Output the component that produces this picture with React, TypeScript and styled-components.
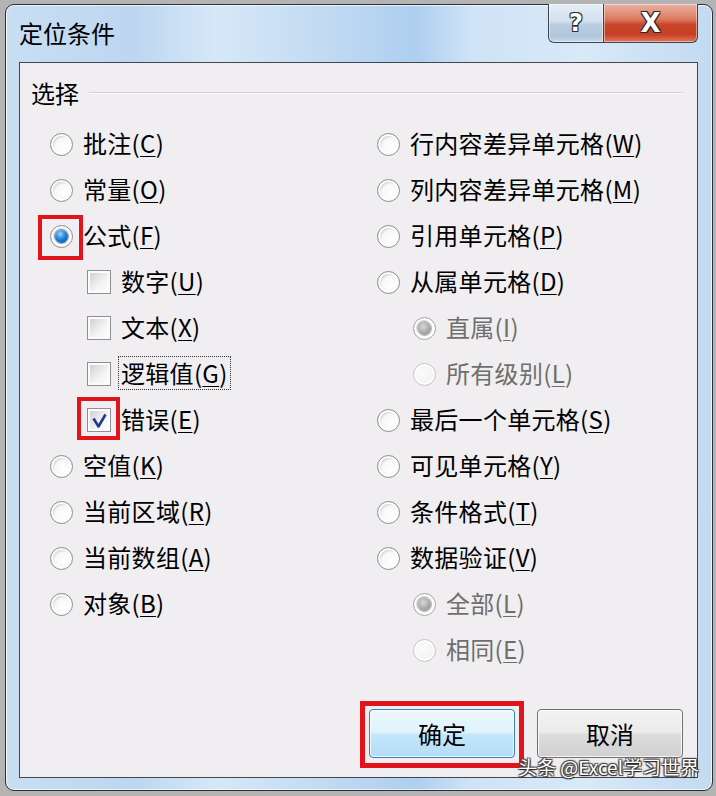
import React, { FC } from 'react';
import styled, { createGlobalStyle } from 'styled-components';

const GlobalStyle = createGlobalStyle`
  html, body {
    margin: 0;
    padding: 0;
    background: #b4b4b4;
    font-family: 'Noto Sans CJK SC', 'Noto Sans', sans-serif;
  }
`;

const Page = styled.div`
  width: 716px;
  height: 796px;
  padding: 4px 0 0 5px;
  box-sizing: border-box;
  position: relative;
  overflow: hidden;
`;

const Window = styled.div`
  width: 708px;
  height: 787px;
  box-sizing: border-box;
  border: 1px solid #2c2f33;
  border-radius: 9px;
  padding: 0 14px 12px 13px;
  display: flex;
  flex-direction: column;
  background: linear-gradient(
      90deg,
      #c9def3 0%,
      #bdd6f0 18%,
      #d6e8f8 30%,
      #c2daf2 45%,
      #aecff0 58%,
      #cfe3f6 66%,
      #d8e9f8 82%,
      #c3daf1 100%
    );
  box-shadow: inset 0 0 0 1px rgba(255, 255, 255, 0.7);
`;

const TitleBar = styled.div`
  height: 57px;
  display: flex;
  align-items: flex-start;
  flex-shrink: 0;
`;

const Title = styled.div`
  margin-top: 13px;
  font-size: 24px;
  line-height: 30px;
  color: #000;
`;

const CaptionButtons = styled.div`
  margin-left: auto;
  margin-top: -1px;
  display: flex;
`;

const CaptionButton = styled.div<{ $close?: boolean }>`
  width: ${(p) => (p.$close ? '94px' : '56px')};
  height: 39px;
  box-sizing: border-box;
  border: 1px solid #3b4552;
  border-top: none;
  border-left: ${(p) => (p.$close ? 'none' : '1px solid #3b4552')};
  border-radius: ${(p) => (p.$close ? '0 0 6px 0' : '0 0 0 6px')};
  display: flex;
  align-items: center;
  justify-content: center;
  font-family: 'DejaVu Sans', sans-serif;
  font-weight: bold;
  font-size: ${(p) => (p.$close ? '26px' : '24px')};
  color: #fff;
  text-shadow: -1px -1px 0 #2a2a2a, 1px -1px 0 #2a2a2a, -1px 1px 0 #2a2a2a,
    1px 1px 0 #2a2a2a;
  background: ${(p) =>
    p.$close
      ? 'linear-gradient(180deg, #eab2a3 0%, #dc7a60 40%, #c9442a 55%, #c63f26 80%, #e0775a 100%)'
      : 'linear-gradient(180deg, #e6eef6 0%, #d3e0ee 45%, #b9cde1 55%, #b2c7dc 85%, #c9d9ea 100%)'};
  box-shadow: inset 0 0 0 1px rgba(255, 255, 255, 0.45);
`;

const Content = styled.div`
  flex: 1;
  border: 1px solid #3e4650;
  background: #f0eef0;
  display: flex;
  flex-direction: column;
  padding: 0 14px 19px 0;
`;

const GroupHeader = styled.div`
  margin-top: 17px;
  height: 26px;
  display: flex;
  align-items: center;
  padding-left: 11px;
`;

const GroupLabel = styled.span`
  font-size: 24px;
  line-height: 26px;
  color: #000;
`;

const GroupLine = styled.div`
  flex: 1;
  margin-left: 10px;
  margin-right: -1px;
  height: 1px;
  background: #d2d2d6;
  border-bottom: 1px solid #fbfbfb;
`;

const Options = styled.div`
  display: grid;
  grid-template-columns: 327px 1fr;
  padding-left: 30px;
  margin-top: 15px;
`;

const Column = styled.div`
  display: flex;
  flex-direction: column;
`;

const Row = styled.div<{ $indent?: number }>`
  height: 46px;
  display: flex;
  align-items: center;
  padding-left: ${(p) => (p.$indent ? p.$indent : 0)}px;
`;

const Label = styled.span<{ $disabled?: boolean; $focus?: boolean }>`
  margin-left: 10px;
  font-size: 24px;
  line-height: 30px;
  white-space: nowrap;
  letter-spacing: 0.3px;
  color: ${(p) => (p.$disabled ? '#6e6e6e' : '#000')};
  padding: 1px 2px;
  margin-right: -2px;
  border: 1px ${(p) => (p.$focus ? 'dotted #333' : 'solid transparent')};
  position: relative;
  left: -3px;
  top: -1px;

  u {
    text-decoration: underline;
    text-underline-offset: 3px;
    text-decoration-thickness: 1px;
  }
`;

type RadioState = 'off' | 'on' | 'dim-on' | 'dim-off';

const RadioCircle = styled.span<{ $state: RadioState }>`
  width: 23px;
  height: 23px;
  box-sizing: border-box;
  border-radius: 50%;
  flex-shrink: 0;
  display: inline-flex;
  align-items: center;
  justify-content: center;
  border: 1px solid
    ${(p) =>
      p.$state === 'dim-off' ? '#c6c6c6' : p.$state === 'dim-on' ? '#a9a9a9' : '#8d8f92'};
  background: ${(p) =>
    p.$state === 'dim-off'
      ? 'radial-gradient(circle at 40% 40%, #fbfbfb 0, #f4f4f4 55%, #e9e9e9 100%)'
      : 'radial-gradient(circle at 60% 62%, #ffffff 0, #f7f7f7 48%, #d2d2d2 64%, #f0f0f0 80%, #ffffff 100%)'};
  box-shadow: inset 0 0 0 2px #fdfdfd;
`;

const RadioDot = styled.span<{ $dim?: boolean }>`
  width: 13px;
  height: 13px;
  border-radius: 50%;
  background: ${(p) =>
    p.$dim
      ? 'radial-gradient(circle at 40% 35%, #d8d8d8 0, #a8a8a8 55%, #8c8c8c 100%)'
      : 'radial-gradient(circle at 40% 30%, #9fd4fb 0, #2a8ae0 40%, #0b5aa8 80%, #0a4f96 100%)'};
  box-shadow: 0 0 0 1px
    ${(p) => (p.$dim ? 'rgba(120,120,120,0.5)' : 'rgba(10,60,120,0.45)')};
`;

const CheckBoxBox = styled.span`
  width: 24px;
  height: 24px;
  box-sizing: border-box;
  flex-shrink: 0;
  border: 1px solid #8d8f92;
  background: linear-gradient(135deg, #c9c9c9 0%, #e4e4e4 35%, #f4f4f4 60%, #ffffff 100%);
  box-shadow: inset 0 0 0 2px #fbfbfb;
  display: inline-flex;
  align-items: center;
  justify-content: center;
`;

const Marked = styled.span<{ $inset: string; $width?: number }>`
  position: relative;
  display: inline-flex;

  &::after {
    content: '';
    position: absolute;
    inset: ${(p) => p.$inset};
    border: ${(p) => p.$width || 4}px solid #e1141b;
    pointer-events: none;
  }
`;

const Footer = styled.div`
  margin-top: auto;
  display: flex;
  justify-content: flex-end;
  gap: 22px;
`;

const DialogButton = styled.div<{ $primary?: boolean }>`
  width: 146px;
  height: 49px;
  box-sizing: border-box;
  border: 1px solid ${(p) => (p.$primary ? '#3c7fb1' : '#707070')};
  border-radius: 4px;
  display: flex;
  align-items: center;
  justify-content: center;
  font-size: 24px;
  color: #000;
  background: ${(p) =>
    p.$primary
      ? 'linear-gradient(180deg, #ecf7fd 0%, #dff2fc 48%, #c4e6fa 52%, #b3ddf6 100%)'
      : 'linear-gradient(180deg, #f3f3f3 0%, #ebebeb 48%, #dddddd 52%, #d0d0d0 100%)'};
  box-shadow: inset 0 0 0 1px rgba(255, 255, 255, 0.8);
`;

const Watermark = styled.div`
  position: absolute;
  left: 518px;
  top: 755px;
  font-family: 'Noto Sans CJK SC', 'Noto Sans', sans-serif;
  font-size: 19px;
  line-height: 24px;
  color: #fff;
  white-space: nowrap;
  text-shadow: 1px 1px 1px #222, -1px -1px 1px #444, 1px -1px 1px #444, -1px 1px 1px #444;
`;

const Radio: FC<{ state?: RadioState }> = ({ state = 'off' }) => (
  <RadioCircle $state={state}>
    {state === 'on' && <RadioDot />}
    {state === 'dim-on' && <RadioDot $dim />}
  </RadioCircle>
);

const CheckBox: FC<{ checked?: boolean }> = ({ checked }) => (
  <CheckBoxBox>
    {checked && (
      <svg width="17" height="17" viewBox="0 0 17 17">
        <path d="M2.5 6.5 L7.5 14.5 L14.5 2.5" fill="none" stroke="#25388f" strokeWidth="2.6" strokeLinejoin="round" />
      </svg>
    )}
  </CheckBoxBox>
);

const Text: FC<{ text: string; k: string; disabled?: boolean; focus?: boolean }> = ({
  text,
  k,
  disabled,
  focus,
}) => (
  <Label $disabled={disabled} $focus={focus}>
    {text}(<u>{k}</u>)
  </Label>
);

const App: FC = () => {
  return (
    <>
      <GlobalStyle />
      <Page>
        <Window>
          <TitleBar>
            <Title>定位条件</Title>
            <CaptionButtons>
              <CaptionButton>?</CaptionButton>
              <CaptionButton $close>X</CaptionButton>
            </CaptionButtons>
          </TitleBar>
          <Content>
            <GroupHeader>
              <GroupLabel>选择</GroupLabel>
              <GroupLine />
            </GroupHeader>
            <Options>
              <Column>
                <Row>
                  <Radio />
                  <Text text="批注" k="C" />
                </Row>
                <Row>
                  <Radio />
                  <Text text="常量" k="O" />
                </Row>
                <Row>
                  <Marked $inset="-10px -10px -12px -12px">
                    <Radio state="on" />
                  </Marked>
                  <Text text="公式" k="F" />
                </Row>
                <Row $indent={37}>
                  <CheckBox />
                  <Text text="数字" k="U" />
                </Row>
                <Row $indent={37}>
                  <CheckBox />
                  <Text text="文本" k="X" />
                </Row>
                <Row $indent={37}>
                  <CheckBox />
                  <Text text="逻辑值" k="G" focus />
                </Row>
                <Row $indent={37}>
                  <Marked $inset="-11px -9px -8px -10px">
                    <CheckBox checked />
                  </Marked>
                  <Text text="错误" k="E" />
                </Row>
                <Row>
                  <Radio />
                  <Text text="空值" k="K" />
                </Row>
                <Row>
                  <Radio />
                  <Text text="当前区域" k="R" />
                </Row>
                <Row>
                  <Radio />
                  <Text text="当前数组" k="A" />
                </Row>
                <Row>
                  <Radio />
                  <Text text="对象" k="B" />
                </Row>
              </Column>
              <Column>
                <Row>
                  <Radio />
                  <Text text="行内容差异单元格" k="W" />
                </Row>
                <Row>
                  <Radio />
                  <Text text="列内容差异单元格" k="M" />
                </Row>
                <Row>
                  <Radio />
                  <Text text="引用单元格" k="P" />
                </Row>
                <Row>
                  <Radio />
                  <Text text="从属单元格" k="D" />
                </Row>
                <Row $indent={36}>
                  <Radio state="dim-on" />
                  <Text text="直属" k="I" disabled />
                </Row>
                <Row $indent={36}>
                  <Radio state="dim-off" />
                  <Text text="所有级别" k="L" disabled />
                </Row>
                <Row>
                  <Radio />
                  <Text text="最后一个单元格" k="S" />
                </Row>
                <Row>
                  <Radio />
                  <Text text="可见单元格" k="Y" />
                </Row>
                <Row>
                  <Radio />
                  <Text text="条件格式" k="T" />
                </Row>
                <Row>
                  <Radio />
                  <Text text="数据验证" k="V" />
                </Row>
                <Row $indent={36}>
                  <Radio state="dim-on" />
                  <Text text="全部" k="L" disabled />
                </Row>
                <Row $indent={36}>
                  <Radio state="dim-off" />
                  <Text text="相同" k="E" disabled />
                </Row>
              </Column>
            </Options>
            <Footer>
              <Marked $inset="-8px -9px -10px -9px" $width={5}>
                <DialogButton $primary>确定</DialogButton>
              </Marked>
              <DialogButton>取消</DialogButton>
            </Footer>
          </Content>
        </Window>
        <Watermark>头条 @Excel学习世界</Watermark>
      </Page>
    </>
  );
};

export default App;
